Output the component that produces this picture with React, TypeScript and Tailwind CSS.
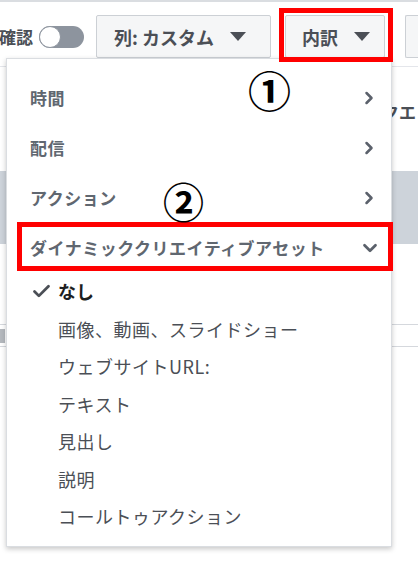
import { ChevronRight, ChevronDown, Check } from 'lucide-react'

const font = { fontFamily: '"Noto Sans CJK JP", "Noto Sans", sans-serif' }

const groups = ['時間', '配信', 'アクション']

const assets = [
    '画像、動画、スライドショー',
    'ウェブサイトURL:',
    'テキスト',
    '見出し',
    '説明',
    'コールトゥアクション',
]

function Caret() {
    return (
        <svg width="16" height="9" viewBox="0 0 16 9" className="shrink-0">
            <polygon points="0,0 16,0 8,9" fill="#4b4f56" />
        </svg>
    )
}

export default function App() {
    return (
        <div className="relative w-[418px] h-[563px] bg-white overflow-hidden" style={font}>
            {/* page behind the menu */}
            <div className="border-t-2 border-[#dadde1]">
                <div className="flex items-center pt-[12px] h-[57px] whitespace-nowrap">
                    <span className="shrink-0 text-[17px] font-bold text-[#4b4f56] leading-none -ml-[1px]">確認</span>
                    <div className="shrink-0 ml-[6px] w-[45px] h-[22px] rounded-full bg-[#8d949e] relative">
                        <div className="absolute left-0 top-0 w-[22px] h-[22px] rounded-full bg-white border border-[#8d949e]" />
                    </div>
                    <button className="shrink-0 ml-[12px] w-[175px] h-[43px] bg-[#f5f6f7] border border-[#ccd0d5] rounded-[2px] flex items-center pl-[17px] gap-[16px]">
                        <span className="text-[18px] font-bold text-[#4b4f56] leading-none">列: カスタム</span>
                        <Caret />
                    </button>
                    <button className="shrink-0 ml-[14px] w-[100px] h-[43px] bg-[#f5f6f7] border border-[#ccd0d5] rounded-[2px] flex items-center pl-[16px] gap-[16px]">
                        <span className="text-[18px] font-bold text-[#4b4f56] leading-none">内訳</span>
                        <Caret />
                    </button>
                    <div className="shrink-0 ml-[20px] w-[14px] h-[43px] bg-[#f5f6f7] border-y border-l border-[#ccd0d5] rounded-l-[2px]" />
                </div>
                <div className="mt-[7px] border-t border-[#e4e6eb]">
                    <div className="h-[104px] flex items-center justify-end pb-[16px] pr-[2px]">
                        <span className="text-[17px] font-bold text-[#4b4f56] leading-none">クエ</span>
                    </div>
                    <div className="h-[73px] bg-[#cdd3da]" />
                    <div className="h-[80px]" />
                    <div className="h-[23px] border-y border-[#d5d8dd] flex items-center">
                        <div className="w-[5px] h-[14px] bg-[#b4b8bd]" />
                    </div>
                </div>
            </div>

            {/* dropdown menu */}
            <div className="absolute left-[6px] top-[58px] w-[386px] h-[489px] bg-white border border-[#dadde1] shadow-[0_2px_5px_rgba(0,0,0,0.22)] pt-[14px]">
                {groups.map(g => (
                    <div key={g} className="h-[50px] flex items-center justify-between pl-[23px] pr-[12px]">
                        <span className="text-[17px] font-bold text-[#606770] tracking-[0.5px]">{g}</span>
                        <ChevronRight className="w-[20px] h-[20px] text-[#5b616b]" strokeWidth={3} />
                    </div>
                ))}
                <div className="h-[50px] flex items-center justify-between pl-[23px] pr-[10px]">
                    <span className="text-[17px] font-bold text-[#606770] tracking-[0.5px]">ダイナミッククリエイティブアセット</span>
                    <ChevronDown className="w-[22px] h-[22px] text-[#5b616b]" strokeWidth={3} />
                </div>
                <div className="h-[37.5px] flex items-center pl-[24px]">
                    <Check className="w-[21px] h-[21px] text-[#4b4f56] mr-[6px]" strokeWidth={3.2} />
                    <span className="text-[18px] font-bold text-[#1c1e21]">なし</span>
                </div>
                {assets.map(a => (
                    <div key={a} className="h-[37.5px] flex items-center pl-[51px]">
                        <span className="text-[18px] text-[#4b4f56] tracking-[0.5px]">{a}</span>
                    </div>
                ))}
            </div>

            {/* annotations */}
            <div className="absolute left-[279px] top-[8px] w-[114px] h-[54px] border-[5px] border-[#ff0000]" />
            <div className="absolute left-[17px] top-[222px] w-[376px] h-[49px] border-[5px] border-[#ff0000]" />
            <span className="absolute left-[248px] top-[68px] text-[43px] leading-none font-bold text-black">①</span>
            <span className="absolute left-[163px] top-[180px] text-[41px] leading-none font-bold text-black">②</span>
        </div>
    )
}
